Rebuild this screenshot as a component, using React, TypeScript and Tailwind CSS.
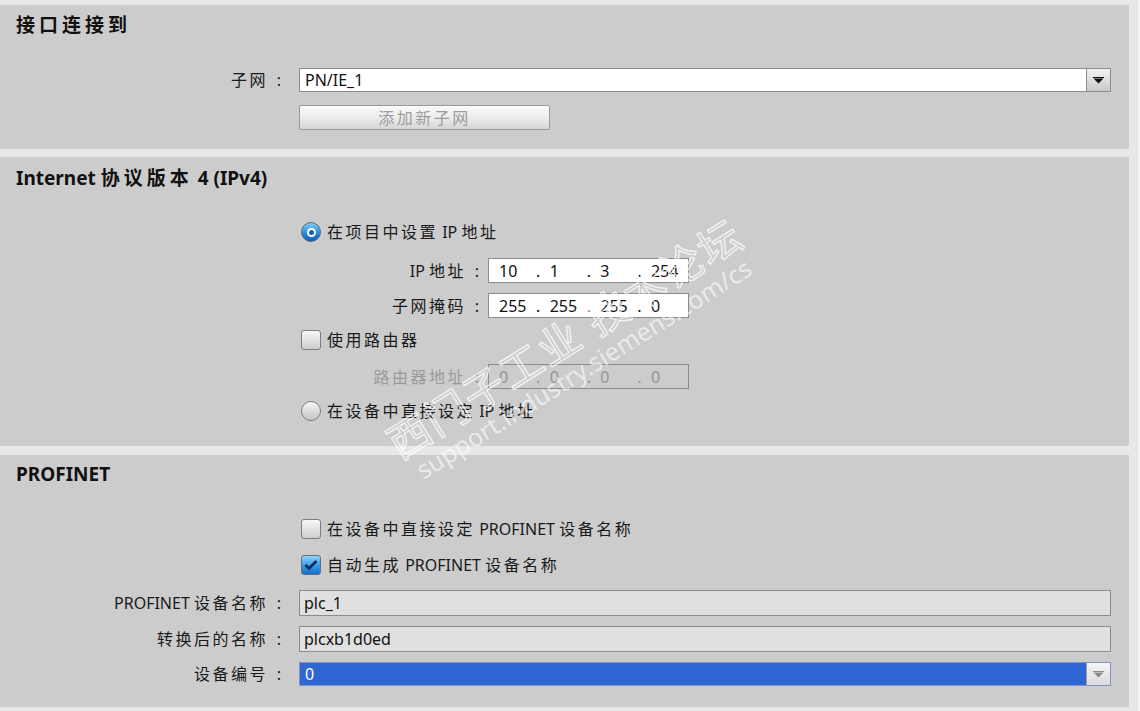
import React, { Fragment } from 'react';

const CJK = /[\u3000-\u303f\u4e00-\u9fff\uff00-\uffef]/;

// splits a label into CJK / latin runs so only the CJK runs get the wider spacing;
// the full-width colon is drawn as a centred ascii colon in a fixed cell
function Txt({ s, wide }: { s: string; wide?: boolean }) {
  const colon = s.endsWith('：');
  const body = colon ? s.slice(0, -1) : s;
  const parts = body.split(/([\u3000-\u303f\u4e00-\u9fff\uff00-\uffef]+)/);
  return (
    <>
      {parts.map((p, i) =>
        CJK.test(p) ? (
          <span key={i} className={wide ? 'tracking-[4px]' : 'tracking-[2.5px]'}>
            {p}
          </span>
        ) : (
          <Fragment key={i}>{p}</Fragment>
        )
      )}
      {colon && <span className="inline-block w-[22px] text-center">:</span>}
    </>
  );
}

function Arrow({ muted }: { muted?: boolean }) {
  return (
    <svg width="11" height="7" viewBox="0 0 11 7">
      <rect x="0" y="0" width="11" height="1" fill={muted ? '#8a8a8a' : '#111'} />
      <polygon points="0.5,1.5 10.5,1.5 5.5,6.5" fill={muted ? '#8a8a8a' : '#111'} />
    </svg>
  );
}

function Radio({ checked }: { checked?: boolean }) {
  if (checked) {
    return (
      <div className="flex h-[20px] w-[20px] items-center justify-center rounded-full border border-[#5b6875] bg-gradient-to-b from-[#7dcdf6] via-[#2c94e0] to-[#0b5fb8]">
        <div className="flex h-[9px] w-[9px] items-center justify-center rounded-full bg-white">
          <div className="h-[5px] w-[5px] rounded-full bg-[#1d5fae]" />
        </div>
      </div>
    );
  }
  return (
    <div className="h-[20px] w-[20px] rounded-full border border-[#7e7e7e] bg-gradient-to-b from-[#f6f6f6] to-[#c4c4c4]" />
  );
}

function Check({ checked }: { checked?: boolean }) {
  if (checked) {
    return (
      <div className="flex h-[20px] w-[20px] items-center justify-center rounded-[3px] border border-[#6a6f76] bg-gradient-to-b from-[#8fd4f8] via-[#3aa0e6] to-[#1470c8]">
        <svg width="14" height="12" viewBox="0 0 14 12">
          <path d="M1.5 6 L5 9.5 L12.5 2" fill="none" stroke="#0d2c55" strokeWidth="2.6" />
        </svg>
      </div>
    );
  }
  return (
    <div className="h-[20px] w-[20px] rounded-[3px] border border-[#7e7e7e] bg-gradient-to-b from-[#f7f7f7] to-[#cdcdcd]" />
  );
}

function IpField({ parts, disabled }: { parts: string[]; disabled?: boolean }) {
  return (
    <div
      className={`flex h-[25px] w-[201px] items-center border border-[#8c8c8c] pl-[10px] ${
        disabled ? 'text-[#959595]' : 'bg-white text-[#111]'
      }`}
    >
      {parts.map((p, i) => (
        <Fragment key={i}>
          {i > 0 && <span className="w-[14px]">.</span>}
          <span className="w-[38px]">{p}</span>
        </Fragment>
      ))}
    </div>
  );
}

function Heading({ s }: { s: string }) {
  return (
    <h2 className="pl-[16px] text-[19px] font-bold leading-[26px] text-[#111]">
      <Txt s={s} wide />
    </h2>
  );
}

export default function App() {
  return (
    <div className="relative h-[711px] w-[1140px] overflow-hidden bg-[#e8e8e8] pr-[11px] pt-[5px] font-['Noto_Sans','Noto_Sans_CJK_SC',sans-serif] text-[16px] text-[#1a1a1a]">
      {/* 接口连接到 */}
      <section className="h-[144px] bg-[#cccccc] pt-[7px]">
        <Heading s="接口连接到" />
        <div className="mt-[30px] flex items-center">
          <div className="w-[290px] text-right">
            <Txt s="子网：" />
          </div>
          <div className="ml-[9px] flex h-[24px] w-[812px] border border-[#8c8c8c] bg-white">
            <div className="flex flex-1 items-center pl-[5px] text-[#111]">PN/IE_1</div>
            <div className="flex w-[24px] items-center justify-center border-l border-[#8c8c8c] bg-gradient-to-b from-[#f2f2f2] to-[#c9c9c9]">
              <Arrow />
            </div>
          </div>
        </div>
        <div className="ml-[299px] mt-[13px] flex h-[25px] w-[251px] items-center justify-center rounded-[2px] border border-[#9a9a9a] bg-gradient-to-b from-[#fafafa] via-[#ececec] to-[#d6d6d6] text-[#9c9c9c]">
          <Txt s="添加新子网" />
        </div>
      </section>

      {/* Internet 协议版本 4 (IPv4) */}
      <section className="mt-[8px] h-[289px] bg-[#cccccc] pt-[8px]">
        <Heading s="Internet 协议版本 4 (IPv4)" />
        <div className="ml-[301px] mt-[29px] flex h-[24px] items-center gap-[6px]">
          <Radio checked />
          <span>
            <Txt s="在项目中设置 IP 地址" />
          </span>
        </div>
        <div className="mt-[14px] flex items-center">
          <div className="w-[488px] text-right">
            <Txt s="IP 地址：" />
          </div>
          <IpField parts={['10', '1', '3', '254']} />
        </div>
        <div className="mt-[10px] flex items-center">
          <div className="w-[488px] text-right">
            <Txt s="子网掩码：" />
          </div>
          <IpField parts={['255', '255', '255', '0']} />
        </div>
        <div className="ml-[301px] mt-[10px] flex h-[24px] items-center gap-[6px]">
          <Check />
          <span>
            <Txt s="使用路由器" />
          </span>
        </div>
        <div className="mt-[12px] flex items-center">
          <div className="w-[488px] text-right text-[#9a9a9a]">
            <Txt s="路由器地址：" />
          </div>
          <IpField parts={['0', '0', '0', '0']} disabled />
        </div>
        <div className="ml-[301px] mt-[10px] flex h-[24px] items-center gap-[6px]">
          <Radio />
          <span>
            <Txt s="在设备中直接设定 IP 地址" />
          </span>
        </div>
      </section>

      {/* PROFINET */}
      <section className="mt-[9px] h-[252px] bg-[#cccccc] pt-[6px]">
        <Heading s="PROFINET" />
        <div className="ml-[301px] mt-[30px] flex h-[24px] items-center gap-[6px]">
          <Check />
          <span>
            <Txt s="在设备中直接设定 PROFINET 设备名称" />
          </span>
        </div>
        <div className="ml-[301px] mt-[12px] flex h-[24px] items-center gap-[6px]">
          <Check checked />
          <span>
            <Txt s="自动生成 PROFINET 设备名称" />
          </span>
        </div>
        <div className="mt-[13px] flex items-center">
          <div className="w-[290px] text-right">
            <Txt s="PROFINET 设备名称：" />
          </div>
          <div className="ml-[9px] flex h-[26px] w-[812px] items-center border border-[#8c8c8c] bg-[#e0e0e0] pl-[4px] text-[#111]">
            plc_1
          </div>
        </div>
        <div className="mt-[10px] flex items-center">
          <div className="w-[290px] text-right">
            <Txt s="转换后的名称：" />
          </div>
          <div className="ml-[9px] flex h-[26px] w-[812px] items-center border border-[#8c8c8c] bg-[#e0e0e0] pl-[4px] text-[#111]">
            plcxb1d0ed
          </div>
        </div>
        <div className="mt-[10px] flex items-center">
          <div className="w-[290px] text-right">
            <Txt s="设备编号：" />
          </div>
          <div className="ml-[9px] flex h-[24px] w-[812px] border border-[#7f95c8] bg-[#3265d4]">
            <div className="flex flex-1 items-center pl-[5px] text-white">0</div>
            <div className="flex w-[24px] items-center justify-center border-l border-[#a0a0a0] bg-gradient-to-b from-[#f6f6f6] to-[#dadada]">
              <Arrow muted />
            </div>
          </div>
        </div>
      </section>

      {/* right edge scroll line */}
      <div className="absolute right-0 top-0 h-[711px] w-[2px] bg-[#f4f4f4]" />

      {/* forum watermark */}
      <div className="pointer-events-none absolute left-[572px] top-[350px] flex -translate-x-1/2 -translate-y-1/2 rotate-[-32deg] flex-col items-center leading-none">
        <div className="whitespace-nowrap text-[42px] tracking-[2px] text-transparent [-webkit-text-stroke:1.4px_rgba(255,255,255,0.75)]">
          西门子工业 技术论坛
        </div>
        <div className="mt-[2px] whitespace-nowrap text-[25px] text-white/60">support.industry.siemens.com/cs</div>
      </div>
    </div>
  );
}
